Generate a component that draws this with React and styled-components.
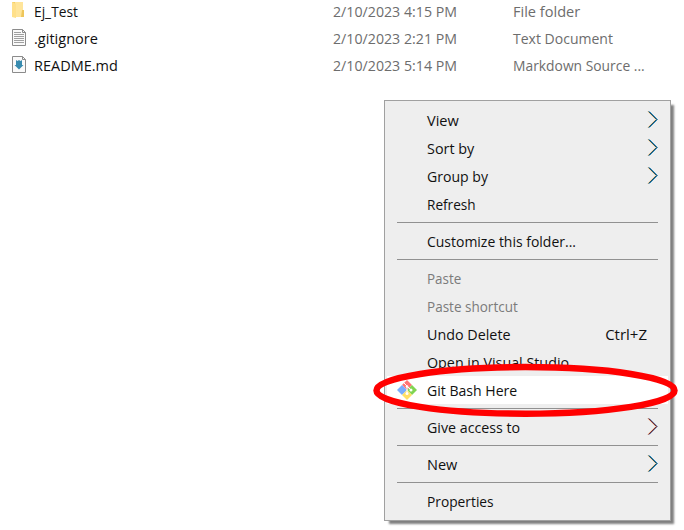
import React, { useLayoutEffect, useRef, useState } from "react";
import styled, { createGlobalStyle } from "styled-components";

const GlobalStyle = createGlobalStyle`
  * { box-sizing: border-box; }
  html, body { margin: 0; background: #fff; overflow: hidden; }
  body { font: 15px/20px "Open Sans", "Noto Sans", sans-serif; color: #111; }
`;

const Window = styled.main`
  position: relative;
  width: 684px;
  height: 530px;
  overflow: hidden;
  background: #fff;
`;

const FileList = styled.div`
  display: flex;
  flex-direction: column;
  margin-top: -2px;
`;

const FileRow = styled.div`
  display: grid;
  grid-template-columns: 23px 299px 180px 1fr;
  align-items: center;
  height: 27px;
  padding-left: 11px;
`;

const Detail = styled.span`
  color: #6d6d6d;
`;

const Label = styled.span`
  display: inline-block;
  white-space: pre;
  transform-origin: ${(p) => (p.$end ? "right" : "left")} center;
`;

const Menu = styled.nav`
  position: absolute;
  left: 384px;
  top: 100px;
  width: 287px;
  height: 421px;
  padding: 5px 2px;
  display: flex;
  flex-direction: column;
  background: #eee;
  border: 1px solid #a0a0a0;
  box-shadow: 4px 4px 2px -1px rgba(0, 0, 0, 0.5);
`;

const MenuItem = styled.div`
  display: grid;
  grid-template-columns: 30px 1fr auto;
  align-items: center;
  height: 28px;
  padding: 0 10px;
  color: ${(p) => (p.$disabled ? "#7b7b7b" : "#111")};
  background: ${(p) => (p.$active ? "#fff" : "transparent")};
`;

const ItemText = styled.span`
  padding-top: 1px;
`;

const IconSlot = styled.span`
  display: flex;
`;

const FileIconSlot = styled(IconSlot)`
  padding-bottom: 1px;
`;

const Shortcut = styled(ItemText)`
  margin-right: 11px;
`;

const Separator = styled.hr`
  width: 261px;
  height: 1px;
  margin: 4px 10px;
  border: 0;
  background: #919191;
`;

const Highlight = styled.svg`
  position: absolute;
  left: 370px;
  top: 358px;
  pointer-events: none;
`;

function FitText({ children, width, end }) {
  const ref = useRef(null);
  const [scale, setScale] = useState(1);
  useLayoutEffect(() => {
    setScale(width / ref.current.offsetWidth);
  }, [children, width]);
  return (
    <Label ref={ref} $end={end} style={{ transform: `translateY(-1px) scaleX(${scale})` }}>
      {children}
    </Label>
  );
}

const FolderIcon = () => (
  <svg width="17" height="20" viewBox="0 0 17 20">
    <path d="M1 1h4v15H1z" fill="#f4cf67" />
    <path d="M4 1h8v15H4z" fill="#ffe59b" />
    <path d="M1 1l4 2v14l-4-1z" fill="#ffe08a" />
    <path d="M11 9h2v7h-3z" fill="#eec65b" />
  </svg>
);

const PageIcon = ({ children }) => (
  <svg width="17" height="20" viewBox="0 0 17 20">
    <path d="M1.5 1.500h10l3 3v13h-13z" fill="#fafafa" stroke="#8b8b8b" />
    <path d="M11.5 1.500v3h3" fill="none" stroke="#8b8b8b" />
    {children}
  </svg>
);

const TextIcon = () => (
  <PageIcon>
    <path
      d="M3 4.500h7M3 6.500h10M3 8.500h10M3 10.500h10M3 12.500h10M3 14.500h10"
      stroke="#a0a0a0"
    />
  </PageIcon>
);

const MarkdownIcon = () => (
  <PageIcon>
    <path d="M5 5l1.500 1L8 5l1.500 1L11 5v5h1.500L8 14.500 3.500 10H5z" fill="#388baf" />
  </PageIcon>
);

const GitIcon = () => (
  <svg width="20" height="20" viewBox="0 0 20 20">
    <path d="M10 0l5 5-5 5-5-5z" fill="#ff7474" />
    <path d="M5 5l5 5-5 5-5-5z" fill="#79adff" />
    <path d="M15 5l5 5-5 5-5-5z" fill="#80d452" />
    <path d="M10 10l5 5-5 5-5-5z" fill="#ffdf66" />
    <path d="M6.500 2.500l3.500 3.500v8M10 6l4 4" fill="none" stroke="#fff" strokeWidth="1" />
    <circle cx="10" cy="6.500" r="1.300" fill="#fff" />
    <circle cx="14" cy="10" r="1.500" fill="#fff" />
    <circle cx="10" cy="13.500" r="1.500" fill="#fff" />
  </svg>
);

const Chevron = ({ warm }) => (
  <svg width="11" height="18" viewBox="0 0 11 18">
    <g fill="none" strokeWidth="1">
      <path d="M1 .5l8 8-8 8" stroke={warm ? "#ed9868" : "#f2c077"} />
      <path d="M2.400.5l8 8-8 8" stroke={warm ? "#719bd0" : "#168fd0"} />
      <path d="M1.700.5l8 8-8 8" stroke={warm ? "#5a0c10" : "#073249"} />
    </g>
  </svg>
);

const files = [
  { Icon: FolderIcon, name: "Ej_Test", w: 44, date: "2/10/2023 4:15 PM", type: "File folder", tw: 67 },
  { Icon: TextIcon, name: ".gitignore", w: 64, date: "2/10/2023 2:21 PM", type: "Text Document", tw: 100 },
  { Icon: MarkdownIcon, name: "README.md", w: 84, date: "2/10/2023 5:14 PM", type: "Markdown Source ...", tw: 132 },
];

const groups = [
  [
    { text: "View", w: 32, submenu: true },
    { text: "Sort by", w: 47, submenu: true },
    { text: "Group by", w: 61, submenu: true },
    { text: "Refresh", w: 49 },
  ],
  [{ text: "Customize this folder...", w: 149 }],
  [
    { text: "Paste", w: 34, disabled: true },
    { text: "Paste shortcut", w: 91, disabled: true },
    { text: "Undo Delete", w: 84, shortcut: "Ctrl+Z" },
    { text: "Open in Visual Studio", w: 142 },
    { text: "Git Bash Here", w: 90, active: true, Icon: GitIcon },
  ],
  [{ text: "Give access to", w: 93, submenu: true, warm: true }],
  [{ text: "New", w: 30, submenu: true }],
  [{ text: "Properties", w: 67 }],
];

export default function App() {
  return (
    <Window>
      <GlobalStyle />
      <FileList>
        {files.map(({ Icon, name, w, date, type, tw }) => (
          <FileRow key={name}>
            <FileIconSlot><Icon /></FileIconSlot>
            <span><FitText width={w}>{name}</FitText></span>
            <Detail><FitText width={124}>{date}</FitText></Detail>
            <Detail><FitText width={tw}>{type}</FitText></Detail>
          </FileRow>
        ))}
      </FileList>
      <Menu>
        {groups.map((items, i) => (
          <React.Fragment key={items[0].text}>
            {i > 0 && <Separator />}
            {items.map(({ text, w, submenu, warm, disabled, shortcut, active, Icon }) => (
              <MenuItem key={text} $disabled={disabled} $active={active}>
                <IconSlot>{Icon && <Icon />}</IconSlot>
                <ItemText><FitText width={w}>{text}</FitText></ItemText>
                {submenu && <Chevron warm={warm} />}
                {shortcut && <Shortcut><FitText width={42} end>{shortcut}</FitText></Shortcut>}
              </MenuItem>
            ))}
          </React.Fragment>
        ))}
      </Menu>
      <Highlight width="312" height="64" viewBox="0 0 312 64">
        <ellipse cx="155.500" cy="32.400" rx="149" ry="23.300" fill="none" stroke="#f00" strokeWidth="6.500" />
      </Highlight>
    </Window>
  );
}
